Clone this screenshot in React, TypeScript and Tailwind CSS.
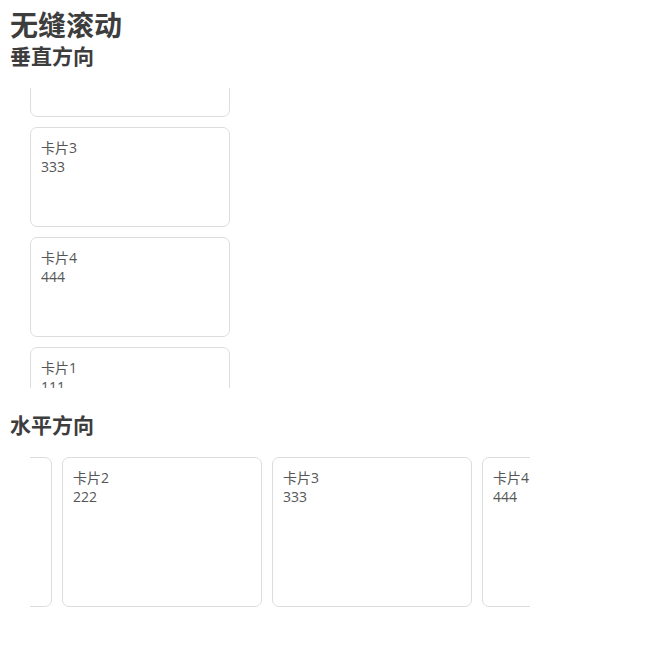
const cards = [
  { title: "卡片1", value: "111" },
  { title: "卡片2", value: "222" },
  { title: "卡片3", value: "333" },
  { title: "卡片4", value: "444" },
];

// scroll offsets of the marquee at the moment of the snapshot
const verticalOffset = -181;
const horizontalOffset = -178;

function Card({ title, value, className }: { title: string; value: string; className: string }) {
  return (
    <div
      className={`shrink-0 rounded-[7px] border border-[#dddddd] bg-white p-[10px] text-[14px] leading-[19px] text-[#555555] ${className}`}
    >
      <div>{title}</div>
      <div>{value}</div>
    </div>
  );
}

export default function App() {
  const loop = [...cards, ...cards];
  return (
    <div
      className="min-h-screen bg-white px-[10px] text-[#3d3d3d]"
      style={{ fontFamily: '"Open Sans", "Noto Sans CJK SC", sans-serif' }}
    >
      <h1 className="pt-[8px] text-[28px] font-bold leading-[34px]">无缝滚动</h1>
      <h2 className="text-[21px] font-bold leading-[28px]">垂直方向</h2>

      <div className="mt-[18px] ml-[20px] h-[300px] w-[200px] overflow-hidden">
        <div className="flex flex-col gap-[10px]" style={{ transform: `translateY(${verticalOffset}px)` }}>
          {loop.map((c, i) => (
            <Card key={i} title={c.title} value={c.value} className="h-[100px] w-[200px]" />
          ))}
        </div>
      </div>

      <h2 className="mt-[23px] text-[21px] font-bold leading-[28px]">水平方向</h2>

      <div className="mt-[18px] ml-[20px] h-[150px] w-[500px] overflow-hidden">
        <div className="flex gap-[10px]" style={{ transform: `translateX(${horizontalOffset}px)` }}>
          {loop.map((c, i) => (
            <Card key={i} title={c.title} value={c.value} className="h-[150px] w-[200px]" />
          ))}
        </div>
      </div>
    </div>
  );
}
